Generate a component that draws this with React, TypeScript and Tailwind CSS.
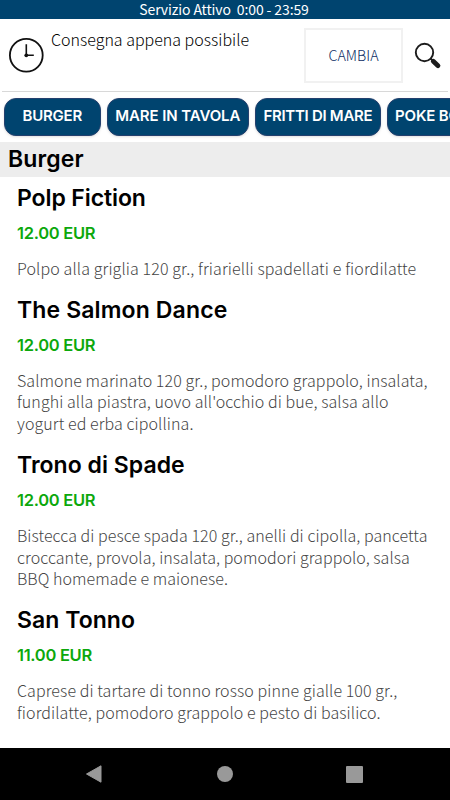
const categories = [
  { label: "BURGER", box: "w-[96.5px]", text: "tracking-[-0.2px]" },
  { label: "MARE IN TAVOLA", box: "w-[142px]", text: "tracking-[-0.1px]" },
  { label: "FRITTI DI MARE", box: "w-[125.6px]", text: "tracking-[-0.28px]" },
  { label: "POKE BOWL", box: "w-[104px]", text: "tracking-[-0.2px]" },
];

const dishes = [
  {
    name: "Polp Fiction",
    price: "12.00 EUR",
    title: "tracking-[-0.1px]",
    body: "tracking-[0.12px]",
    lines: ["Polpo alla griglia 120 gr., friarielli spadellati e fiordilatte"],
  },
  {
    name: "The Salmon Dance",
    price: "12.00 EUR",
    title: "tracking-[0.13px]",
    body: "tracking-[0.085px]",
    lines: [
      "Salmone marinato 120 gr., pomodoro grappolo, insalata,",
      "funghi alla piastra, uovo all'occhio di bue, salsa allo",
      "yogurt ed erba cipollina.",
    ],
  },
  {
    name: "Trono di Spade",
    price: "12.00 EUR",
    title: "tracking-[0.03px]",
    body: "tracking-[0.06px]",
    lines: [
      "Bistecca di pesce spada 120 gr., anelli di cipolla, pancetta",
      "croccante, provola, insalata, pomodori grappolo, salsa",
      "BBQ homemade e maionese.",
    ],
  },
  {
    name: "San Tonno",
    price: "11.00 EUR",
    title: "tracking-[0.05px]",
    body: "tracking-[0.085px]",
    lines: [
      "Caprese di tartare di tonno rosso pinne gialle 100 gr.,",
      "fiordilatte, pomodoro grappolo e pesto di basilico.",
    ],
  },
];

function ClockIcon() {
  return (
    <svg width="36" height="36" viewBox="0 0 36 36" fill="none" stroke="#111">
      <circle cx="18.3" cy="18.3" r="16.4" strokeWidth="1.8" />
      <path d="M18.3 7.3v11h7.5" strokeWidth="1.6" />
      <circle cx="18.3" cy="18.3" r="1.9" fill="#111" stroke="none" />
    </svg>
  );
}

function SearchIcon() {
  return (
    <svg width="28" height="28" viewBox="0 0 28 28" fill="none" stroke="#1c1c1c">
      <circle cx="10.5" cy="10.5" r="8.7" strokeWidth="1.9" />
      <path d="M16.5 16.5l3 3" strokeWidth="2" />
      <path d="M19.3 19.3l4.7 4.4" strokeWidth="4.8" strokeLinecap="round" />
    </svg>
  );
}

export default function App() {
  return (
    <div className="flex h-[800px] w-[450px] flex-col overflow-hidden bg-white font-['Noto_Sans_CJK_JP',sans-serif] text-black">
      <div className="h-[19px] shrink-0 bg-[#00446f] pr-0.5 text-center text-[14px] leading-[19px] tracking-[-0.12px] whitespace-pre text-white">
        {"Servizio Attivo  0:00 - 23:59"}
      </div>

      <header className="mx-0.5 flex h-[73px] shrink-0 border-b border-[#d8d8d8]">
        <div className="mt-[18px] ml-1.5">
          <ClockIcon />
        </div>
        <p className="mt-2 ml-[7px] w-[253px] text-[16px] leading-[25px] font-light whitespace-nowrap">
          Consegna appena possibile
        </p>
        <button className="mt-[9px] h-[55px] w-[99px] shrink-0 border-2 border-[#f1f1f1] pb-0.5 text-[14.3px] font-light text-[#0b2c63]">
          CAMBIA
        </button>
        <button className="mt-[23px] ml-[11px] h-7 shrink-0" aria-label="Cerca">
          <SearchIcon />
        </button>
      </header>

      <nav className="flex h-[50px] shrink-0 gap-[6.3px] overflow-hidden pt-1.5 pl-1">
        {categories.map((c) => (
          <button
            key={c.label}
            className={`h-[38px] shrink-0 rounded-xl border border-[#24406e] bg-[#00446f] pb-px font-['Inter',sans-serif] text-[15px] font-semibold whitespace-nowrap text-white shadow-sm ${c.box}`}
          >
            <span className={c.text}>{c.label}</span>
          </button>
        ))}
      </nav>

      <h1 className="h-[35px] shrink-0 bg-[#ededed] pl-2 font-['Inter',sans-serif] text-[23px] leading-[34px] font-semibold tracking-[0.15px]">
        Burger
      </h1>

      <main className="flex-1 overflow-hidden px-[17px] pt-1.5">
        {dishes.map((d) => (
          <section key={d.name} className="pb-[15px]">
            <h2
              className={`font-['Inter',sans-serif] text-[23px] leading-[31px] font-semibold whitespace-nowrap ${d.title}`}
            >
              {d.name}
            </h2>
            <p className="mt-1.5 font-['Inter',sans-serif] text-[16.5px] leading-[26px] font-semibold tracking-[-0.3px] text-[#0ca80c]">
              {d.price}
            </p>
            <div
              className={`mt-3 text-[16px] leading-[21.7px] font-light text-[#444] ${d.body}`}
            >
              {d.lines.map((line) => (
                <p key={line} className="whitespace-nowrap">
                  {line}
                </p>
              ))}
            </div>
          </section>
        ))}
      </main>

      <footer className="flex h-[52px] shrink-0 items-center bg-black pl-[85px]">
        <svg width="17" height="18" viewBox="0 0 17 18" fill="#999">
          <path d="M1.5 9L16 .8v16.4z" stroke="#999" strokeLinejoin="round" />
        </svg>
        <div className="ml-[115px] size-4 rounded-full bg-[#999]" />
        <div className="ml-[113px] size-[17px] rounded-[1px] bg-[#999]" />
      </footer>
    </div>
  );
}
